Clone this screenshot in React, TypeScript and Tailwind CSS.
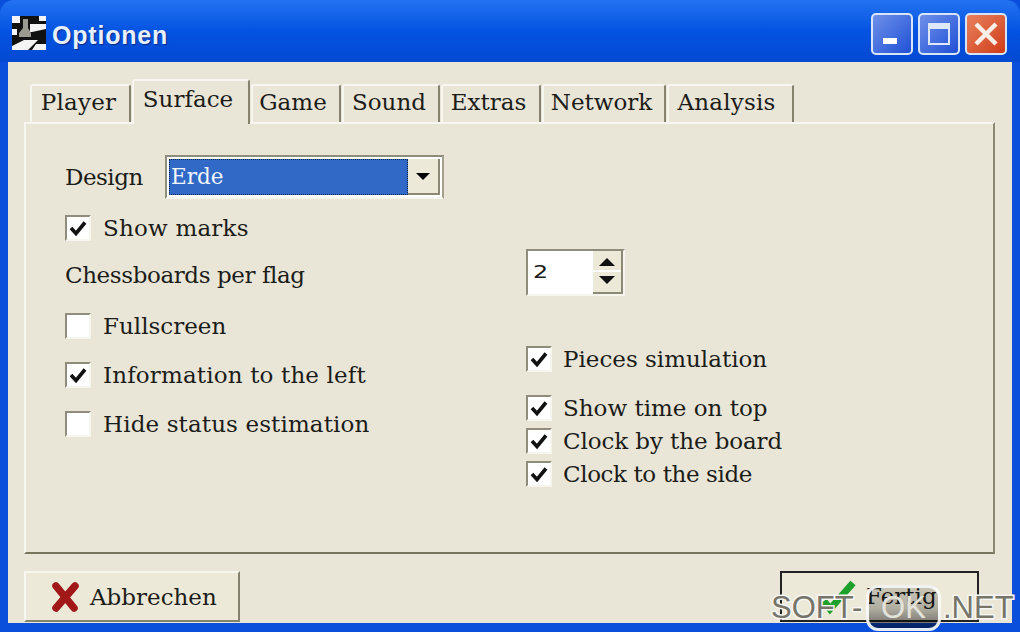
import type { ReactNode } from 'react';

const TABS = [
  { label: 'Player', width: 'w-[101px]', pad: 'pr-[4px] tracking-[0.2px]' },
  { label: 'Surface', width: 'w-[118px]', pad: 'pr-[6px]', active: true },
  { label: 'Game', width: 'w-[90px]', pad: 'pr-[6px]' },
  { label: 'Sound', width: 'w-[98px]', pad: 'pr-[4px]' },
  { label: 'Extras', width: 'w-[100px]', pad: 'pr-[5px]' },
  { label: 'Network', width: 'w-[124px]', pad: 'pr-[5px]' },
  { label: 'Analysis', width: 'w-[127px]', pad: 'pr-[8px] tracking-[0.2px]' },
];

function Check({
  checked,
  label,
  className = '',
  labelClass = 'ml-[12px]',
}: {
  checked?: boolean;
  label: string;
  className?: string;
  labelClass?: string;
}) {
  return (
    <div className={`flex items-center h-[26px] ${className}`}>
      <span className="w-[26px] h-[26px] bg-white border-2 border-t-[#8f8c7c] border-l-[#8f8c7c] border-r-[#f6f5ee] border-b-[#f6f5ee] flex items-center justify-center">
        {checked && (
          <svg width="20" height="20" viewBox="0 0 20 20">
            <path d="M3 10 L8 15.5 L17 4.5" fill="none" stroke="#111" strokeWidth="3.6" />
          </svg>
        )}
      </span>
      <span className={`whitespace-nowrap ${labelClass}`}>{label}</span>
    </div>
  );
}

function WinButton({ children, red }: { children: ReactNode; red?: boolean }) {
  return (
    <div
      className={`w-[42px] h-[42px] rounded-[5px] border-2 border-[#d8e4f8] flex items-center justify-center ${
        red
          ? 'bg-gradient-to-br from-[#e8805c] to-[#cf3a12]'
          : 'bg-gradient-to-br from-[#6f8fe8] to-[#1f4fd6]'
      }`}
    >
      {children}
    </div>
  );
}

export default function App() {
  return (
    <div className="relative w-[1020px] h-[632px] overflow-hidden bg-[#0a4fdc] text-[#1c1c18] text-[23px] font-['DejaVu_Serif',serif]">
      {/* Title bar */}
      <div className="h-[62px] flex items-center pl-[12px] pr-[13px] rounded-t-[14px] bg-gradient-to-b from-[#2272f0] via-[#0553e2] to-[#0349d2]">
        <svg width="34" height="34" viewBox="0 0 34 34" className="mt-[4px]">
          <rect width="34" height="34" fill="#111" />
          <path d="M0 0h8v7H0zM27 0h7v5h-7zM0 13h5v6H0zM18 8h16v5L20 16h-2zM0 30l12-6h14L16 34H0zM24 28h10v6H20z" fill="#f4f4f4" />
          <path d="M11 3h5v9l3 5v4H7v-4l4-5z" fill="#9a9a90" />
        </svg>
        <span className="ml-[6px] mt-[10px] text-[#e6f0ff] font-bold text-[25px] tracking-[0.8px] font-['Liberation_Sans',sans-serif] [text-shadow:1px_1px_1px_#0a2a88]">
          Optionen
        </span>
        <div className="ml-auto flex gap-[5px] mt-[6px]">
          <WinButton>
            <span className="w-[14px] h-[6px] bg-white mt-[14px] mr-[4px]" />
          </WinButton>
          <WinButton>
            <span className="w-[22px] h-[22px] border-2 border-t-[6px] border-[#dfe8fa]" />
          </WinButton>
          <WinButton red>
            <svg width="26" height="26" viewBox="0 0 26 26">
              <path d="M3 3 L23 23 M23 3 L3 23" stroke="#fbeee8" strokeWidth="4.5" />
            </svg>
          </WinButton>
        </div>
      </div>

      {/* Client area */}
      <div className="mx-[8px] h-[561px] bg-[#e9e6d8] pt-[17px] pl-[16px] pr-[17px]">
        {/* Tabs */}
        <div className="flex items-end h-[45px] pl-[6px] relative z-10">
          {TABS.map((tab) => (
            <div
              key={tab.label}
              className={`${tab.width} ${tab.pad} flex items-center justify-center shrink-0 border-t-2 border-l-2 border-[#f7f6ef] border-r-2 border-r-[#85826f] rounded-t-[3px] ${
                tab.active ? 'h-[45px] bg-[#e9e6d8] pb-[7px] mr-[1px]' : 'h-[38px] pb-[3px] mb-[2px] mr-[1px]'
              }`}
            >
              {tab.label}
            </div>
          ))}
        </div>

        {/* Panel */}
        <div className="h-[432px] -mt-[2px] border-2 border-t-[#f7f6ef] border-l-[#f7f6ef] border-r-[#8b8875] border-b-[#77745f] pl-[39px] pt-[31px] flex">
          <div className="w-[461px] shrink-0">
            <div className="flex items-center h-[44px]">
              <span className="w-[100px] tracking-[-0.5px]">Design</span>
              <div className="w-[279px] h-[44px] border-2 border-t-[#8f8c7c] border-l-[#8f8c7c] border-r-[#a3a08e] border-b-[#f6f5ee] bg-white flex p-[2px]">
                <div className="flex-1 bg-[#3169c6] text-[#f2f6ff] text-[21.5px] pl-[1px] leading-[34px] border border-dotted border-[#15264f]">
                  Erde
                </div>
                <div className="w-[32px] bg-[#ece9d8] border-b-2 border-r-2 border-[#8b8875] flex items-center justify-center">
                  <span className="w-0 h-0 border-x-[7px] border-x-transparent border-t-[7px] border-t-black" />
                </div>
              </div>
            </div>
            <Check checked label="Show marks" className="mt-[16px]" labelClass="ml-[12px] tracking-[0.2px]" />
            <div className="h-[26px] leading-[26px] mt-[21px] whitespace-nowrap tracking-[-0.4px]">Chessboards per flag</div>
            <Check label="Fullscreen" className="mt-[25px]" />
            <Check checked label="Information to the left" className="mt-[23px]" labelClass="ml-[12px] tracking-[0.15px]" />
            <Check label="Hide status estimation" className="mt-[23px]" labelClass="ml-[12px] tracking-[0.12px]" />
          </div>

          <div className="flex flex-col items-start">
            <div className="mt-[94px] w-[99px] h-[47px] border-2 border-t-[#8f8c7c] border-l-[#8f8c7c] border-r-[#f6f5ee] border-b-[#f6f5ee] bg-white flex">
              <span className="flex-1 pl-[5px] leading-[38px]">
                <span className="inline-block origin-left scale-x-[1.4] text-[17px] font-['DejaVu_Sans',sans-serif]">2</span>
              </span>
              <div className="w-[30px] flex flex-col bg-[#ece9d8] border-r-2 border-b-2 border-[#8b8875]">
                <div className="h-[21px] pt-[3px] flex items-center justify-center border-b-2 border-white">
                  <span className="w-0 h-0 border-x-[8px] border-x-transparent border-b-[8px] border-b-[#111]" />
                </div>
                <div className="flex-1 pb-[5px] flex items-center justify-center">
                  <span className="w-0 h-0 border-x-[8px] border-x-transparent border-t-[8px] border-t-[#111]" />
                </div>
              </div>
            </div>
            <Check checked label="Pieces simulation" className="mt-[50px]" labelClass="ml-[11px]" />
            <Check checked label="Show time on top" className="mt-[23px]" labelClass="ml-[11px]" />
            <Check checked label="Clock by the board" className="mt-[7px]" labelClass="ml-[11px] tracking-[-0.1px]" />
            <Check checked label="Clock to the side" className="mt-[7px]" labelClass="ml-[11px] tracking-[-0.4px]" />
          </div>
        </div>

        {/* Footer buttons */}
        <div className="flex justify-between mt-[17px] pr-[16px]">
          <button className="w-[216px] h-[51px] flex items-center pl-[25px] bg-[#ece9d8] border-2 border-t-[#f7f6ef] border-l-[#f7f6ef] border-r-[#85826f] border-b-[#85826f]">
            <svg width="28" height="32" viewBox="0 0 28 32">
              <path d="M5 5 L23 27 M24 5 L5 27" stroke="#a01818" strokeWidth="7.5" strokeLinecap="round" />
            </svg>
            <span className="ml-[11px] pt-[2px]">Abbrechen</span>
          </button>
          <button className="w-[199px] h-[51px] flex items-center pl-[38px] bg-[#ece9d8] border-2 border-[#222]">
            <svg width="40" height="40" viewBox="0 0 40 40">
              <path d="M4 24 L10 32 L33 6" fill="none" stroke="#1ea02c" strokeWidth="7" />
            </svg>
            <span className="ml-[6px]">Fertig</span>
          </button>
        </div>
      </div>

      {/* Watermark */}
      <div className="absolute left-[771px] top-[585px] h-[46px] flex items-center text-[31px] font-['Liberation_Sans',sans-serif] text-[#77756a] [-webkit-text-stroke:3px_#f6f6f2] [paint-order:stroke_fill] whitespace-nowrap">
        <span className="w-[95px]">SOFT-</span>
        <span className="w-[75px] h-[46px] flex items-center justify-center rounded-[12px] border-[3px] border-white/90 bg-gradient-to-b from-black/15 via-black/25 to-black/55 text-[#e4e3da] [-webkit-text-stroke:0px_transparent]">OK</span>
        <span className="ml-[2px]">.NET</span>
      </div>
    </div>
  );
}
